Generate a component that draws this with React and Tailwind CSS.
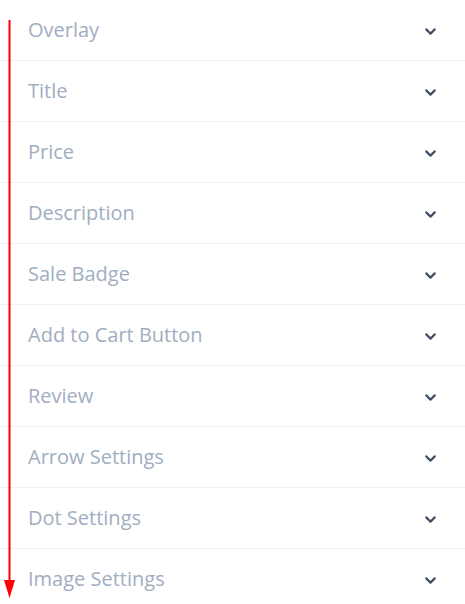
import { ChevronDown } from 'lucide-react';

const sections = [
  'Overlay',
  'Title',
  'Price',
  'Description',
  'Sale Badge',
  'Add to Cart Button',
  'Review',
  'Arrow Settings',
  'Dot Settings',
  'Image Settings',
];

export default function App() {
  return (
    <div className="relative w-[465px] h-[604px] overflow-hidden bg-white" style={{ fontFamily: '"Open Sans", sans-serif' }}>
      <div className="flex flex-col">
        {sections.map((label) => (
          <div
            key={label}
            className="flex items-center justify-between h-[61px] shrink-0 border-b border-[#eff1f5] pl-[28px] pr-[26px]"
          >
            <span className="text-[20px] leading-none text-[#a0aec0]">{label}</span>
            <ChevronDown className="w-[17px] h-[17px] mt-[3px] text-[#3f4e63]" strokeWidth={3} />
          </div>
        ))}
      </div>

      {/* scroll hint arrow */}
      <svg className="absolute left-0 top-0" width="20" height="604" viewBox="0 0 20 604">
        <line x1="9.5" y1="20" x2="9.5" y2="584" stroke="#ff0000" strokeWidth="2" />
        <polygon points="4,580 15,580 9.5,598" fill="#ff0000" />
      </svg>
    </div>
  );
}
